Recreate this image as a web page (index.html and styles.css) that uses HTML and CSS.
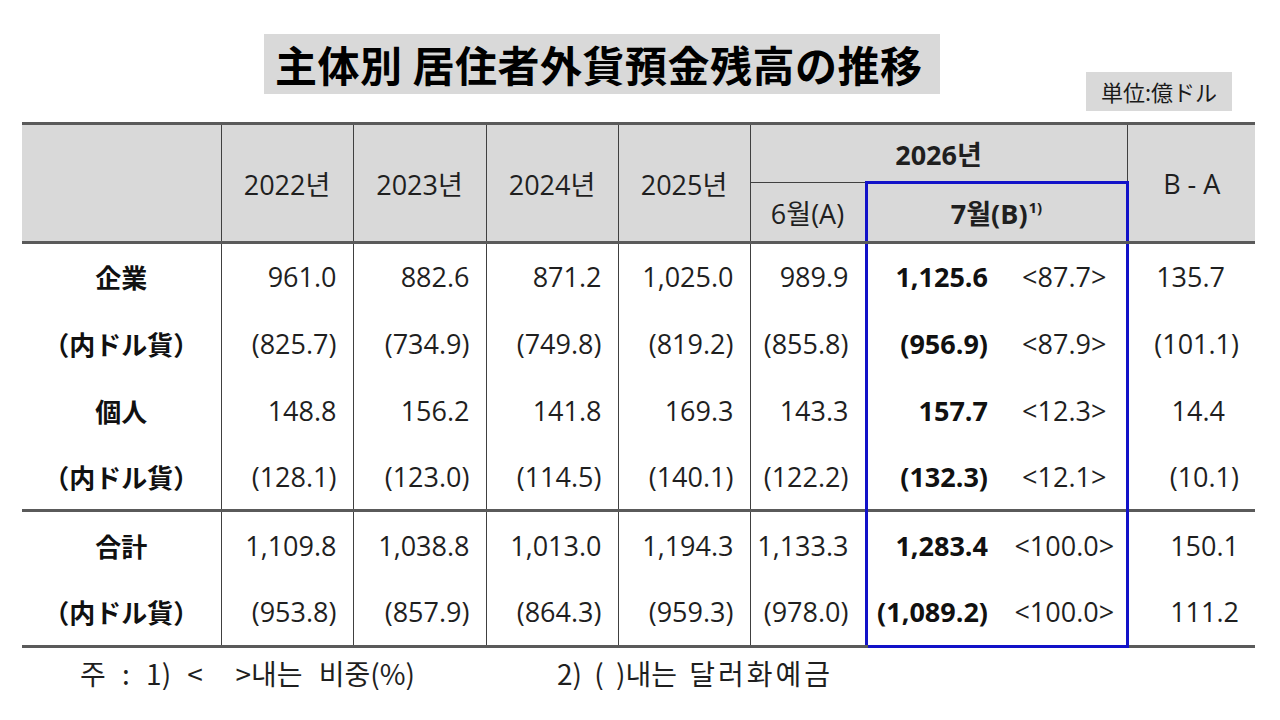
FILE: index.html
```html
<!DOCTYPE html>
<html lang="ja">
<head>
<meta charset="utf-8">
<title>主体別 居住者外貨預金残高の推移</title>
<link rel="stylesheet" href="styles.css">
</head>
<body>
<div class="top">
  <h1 class="title">主体別 居住者外貨預金残高の推移</h1>
  <div class="unit">単位:億ドル</div>
</div>
<table class="data">
  <colgroup>
    <col class="c-lbl"><col class="c-y"><col class="c-y2"><col class="c-y"><col class="c-y"><col class="c-m6"><col class="c-b"><col class="c-p"><col class="c-d">
  </colgroup>
  <thead>
    <tr class="h1">
      <th rowspan="2" class="corner"></th>
      <th rowspan="2">2022년</th>
      <th rowspan="2">2023년</th>
      <th rowspan="2">2024년</th>
      <th rowspan="2">2025년</th>
      <th colspan="3" class="y26">2026년</th>
      <th rowspan="2" class="hd">B - A</th>
    </tr>
    <tr class="h2">
      <th class="m6">6월(A)</th>
      <th colspan="2" class="m7">7월(B)<sup>1)</sup></th>
    </tr>
  </thead>
  <tbody>
    <tr>
      <td class="lbl">企業</td>
      <td class="num">961.0</td><td class="num">882.6</td><td class="num">871.2</td><td class="num">1,025.0</td><td class="num">989.9</td>
      <td class="b">1,125.6</td><td class="pct">&lt;87.7&gt;</td><td class="num dv hang">135.7</td>
    </tr>
    <tr>
      <td class="lbl">（内ドル貨）</td>
      <td class="num">(825.7)</td><td class="num">(734.9)</td><td class="num">(749.8)</td><td class="num">(819.2)</td><td class="num">(855.8)</td>
      <td class="b">(956.9)</td><td class="pct">&lt;87.9&gt;</td><td class="num dv">(101.1)</td>
    </tr>
    <tr>
      <td class="lbl">個人</td>
      <td class="num">148.8</td><td class="num">156.2</td><td class="num">141.8</td><td class="num">169.3</td><td class="num">143.3</td>
      <td class="b">157.7</td><td class="pct">&lt;12.3&gt;</td><td class="num dv hang">14.4</td>
    </tr>
    <tr>
      <td class="lbl">（内ドル貨）</td>
      <td class="num">(128.1)</td><td class="num">(123.0)</td><td class="num">(114.5)</td><td class="num">(140.1)</td><td class="num">(122.2)</td>
      <td class="b">(132.3)</td><td class="pct">&lt;12.1&gt;</td><td class="num dv">(10.1)</td>
    </tr>
    <tr class="sum">
      <td class="lbl">合計</td>
      <td class="num">1,109.8</td><td class="num">1,038.8</td><td class="num">1,013.0</td><td class="num">1,194.3</td><td class="num">1,133.3</td>
      <td class="b">1,283.4</td><td class="pct">&lt;100.0&gt;</td><td class="num dv">150.1</td>
    </tr>
    <tr class="last">
      <td class="lbl">（内ドル貨）</td>
      <td class="num">(953.8)</td><td class="num">(857.9)</td><td class="num">(864.3)</td><td class="num">(959.3)</td><td class="num">(978.0)</td>
      <td class="b">(1,089.2)</td><td class="pct">&lt;100.0&gt;</td><td class="num dv">111.2</td>
    </tr>
  </tbody>
</table>
<div class="notes">
  <span class="n1">주 : 1) &lt;  &gt;내는 비중(%)</span>
  <span class="n2">2) ( )내는 <span class="wide">달러화예금</span></span>
</div>
</body>
</html>
```

FILE: styles.css
```css
* {
  box-sizing: border-box;
}

body {
  margin: 0;
  background: #ffffff;
  color: #1f1f1f;
  font-family: "Open Sans", "Noto Sans CJK KR", sans-serif;
}

.top {
  display: flex;
  align-items: flex-start;
  padding: 34px 48px 0 264px;
}

.title {
  margin: 0;
  height: 60px;
  padding: 0 17px 0 11px;
  background: #d9d9d9;
  color: #000000;
  font-family: "Noto Sans CJK JP", sans-serif;
  font-weight: 700;
  font-size: 42px;
  line-height: 60px;
  letter-spacing: 0.5px;
  white-space: nowrap;
}

.unit {
  margin-left: auto;
  margin-top: 38px;
  height: 39px;
  padding: 0 15px;
  background: #d9d9d9;
  color: #1a1a1a;
  font-family: "Noto Sans CJK JP", sans-serif;
  font-size: 22px;
  line-height: 39px;
}

.data {
  margin: 11px 0 0 22px;
  width: 1233px;
  border-collapse: collapse;
  table-layout: fixed;
}

.c-lbl { width: 199px; }
.c-y { width: 132px; }
.c-y2 { width: 133px; }
.c-m6 { width: 116px; }
.c-b { width: 137px; }
.c-p { width: 124px; }
.c-d { width: 128px; }

.data th {
  padding: 0;
  background: #d9d9d9;
  font-weight: 400;
  font-size: 27px;
  text-align: center;
  border-left: 1.5px solid #404040;
  border-top: 3px solid #5a5a5a;
  border-bottom: 3px solid #5a5a5a;
}

.data th.corner {
  border-left: none;
}

.h1 th {
  height: 59px;
}

.h2 th {
  height: 60px;
}

.data th.y26 {
  font-weight: 700;
  border-bottom: 1.5px solid #404040;
}

.data th.m6 {
  border-top: 1.5px solid #404040;
}

.data th.m7 {
  font-weight: 700;
  border-top: 3px solid #1212c8;
  border-left: 3px solid #1212c8;
  border-right: 3px solid #1212c8;
}

.m7 sup {
  font-size: 15px;
  vertical-align: 0;
  position: relative;
  top: -11px;
  margin-left: 1px;
}

.data td {
  height: 67px;
  padding: 0;
  font-size: 27px;
  border-left: 1.5px solid #404040;
}

.data tr.last td {
  height: 68px;
  border-bottom: 3px solid #5a5a5a;
}

.data tr.sum td {
  height: 68px;
  border-top: 3px solid #5a5a5a;
}

.data td.lbl {
  border-left: none;
  text-align: center;
  color: #111111;
  font-family: "Noto Sans CJK JP", sans-serif;
  font-weight: 700;
  font-size: 26px;
}

.data td.num {
  text-align: right;
  padding-right: 16px;
}

.data td.dv {
  padding-right: 16px;
}

.data td.dv.hang {
  padding-right: 30px;
}

.data td.b {
  text-align: right;
  padding-right: 15px;
  font-weight: 700;
  color: #111111;
  border-left: 3px solid #1212c8;
}

.data td.pct {
  text-align: center;
  border-left: none;
  border-right: 3px solid #1212c8;
}

.data tr.last td.b,
.data tr.last td.pct {
  border-bottom: 3px solid #1212c8;
}

.notes {
  display: flex;
  padding: 8px 0 0 80px;
  font-family: "Noto Sans CJK KR", sans-serif;
  font-size: 28px;
  line-height: 34px;
  word-spacing: 10px;
  color: #1f1f1f;
  white-space: pre;
}

.n1 {
  width: 477px;
}

.n2 {
  word-spacing: 6px;
}

.wide {
  letter-spacing: 3px;
}
```
